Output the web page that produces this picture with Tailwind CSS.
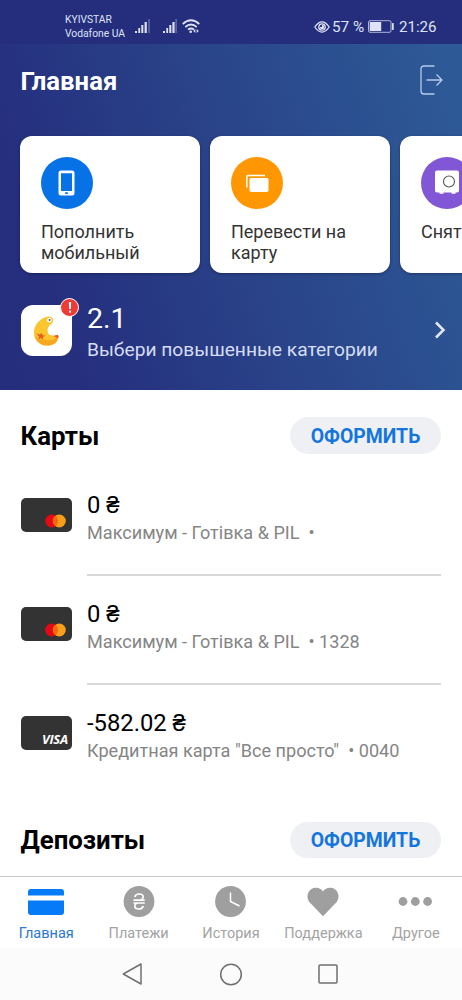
<!DOCTYPE html>
<html lang="ru">
<head>
<meta charset="utf-8">
<meta name="viewport" content="width=device-width, initial-scale=1">
<title>Главная</title>
<script src="https://cdn.jsdelivr.net/npm/@tailwindcss/browser@4"></script>
</head>
<body class="h-[1000px] w-[462px] overflow-hidden bg-white font-['Roboto',sans-serif] text-black">
<div class="flex h-[1000px] w-[462px] flex-col overflow-hidden">

  <!-- Status bar -->
  <div class="flex h-11 shrink-0 items-center bg-[#252e7c] pt-[9px] pr-[26px] pl-[65px] text-[#dfe3f8]">
    <div class="w-[62px] text-[10.3px] leading-[14px] whitespace-nowrap"><div>KYIVSTAR</div><div>Vodafone UA</div></div>
    <svg class="ml-[8px] h-[15px] w-[16px]" viewBox="0 0 16 15" fill="currentColor"><rect x="0" y="12" width="2" height="2"/><rect x="3.3" y="9" width="1.8" height="5"/><rect x="6.3" y="6" width="2" height="8"/><rect x="9.6" y="3" width="2.2" height="11"/><rect x="13.2" y="0" width="1.7" height="14" opacity=".3"/></svg>
    <svg class="ml-[11px] h-[15px] w-[16px]" viewBox="0 0 16 15" fill="currentColor"><rect x="1" y="12" width="2" height="2"/><rect x="4.3" y="9" width="1.8" height="5"/><rect x="7.3" y="6" width="2" height="8"/><rect x="10.400" y="3" width="2.2" height="11"/><rect x="13.3" y="0" width="1.7" height="14" opacity=".3"/></svg>
    <svg class="ml-[4px] h-[15px] w-[18px]" viewBox="0 0 18 15" fill="none" stroke="currentColor" stroke-width="1.7"><path d="M.7 5Q9-2.500 17.300 5M3.300 8Q9 3 14.700 8M6 10.700Q9 8.300 12 10.700"/><circle cx="8.700" cy="12.700" r="1.300" fill="currentColor" stroke="none"/><path d="M13.300 10 11.300 12l2 2zM14.700 10l2 2-2 2z" fill="currentColor" stroke="none"/></svg>
    <svg class="ml-auto h-[12px] w-[16px]" viewBox="0 0 16 12" fill="none" stroke="currentColor" stroke-width="1.300"><path d="M.8 6Q8-4.300 15.200 6 8 16.300.8 6z"/><circle cx="8" cy="6" r="3.200"/><path d="M8 3.800A2.200 2.200 0 1 1 5.800 6H8z" fill="currentColor" stroke="none"/></svg>
    <span class="ml-[2px] w-[32px] text-[15.300px] leading-5 whitespace-nowrap">57 %</span>
    <svg class="ml-[4px] h-[13px] w-[26px]" viewBox="0 0 26 13" fill="none"><rect x=".5" y=".7" width="22.500" height="11.600" rx="1.500" stroke="currentColor" opacity=".75"/><rect x="1.700" y="2" width="11.500" height="9" fill="currentColor"/><rect x="24" y="3" width="1.700" height="7" rx=".6" fill="currentColor"/></svg>
    <span class="ml-[5px] w-[37px] text-[15.100px] leading-5 whitespace-nowrap">21:26</span>
  </div>

  <!-- Header -->
  <header class="flex h-[346px] shrink-0 flex-col overflow-hidden bg-[linear-gradient(72deg,#252e7c_0%,#252f7e_15%,#2a458a_55%,#2d5a96_97%)]">
    <div class="flex h-[92px] items-start justify-between pt-[21px] pr-[19px] pl-[20.5px]">
      <h1 class="text-[25.700px] leading-[32px] font-bold text-white">Главная</h1>
      <svg class="h-[30px] w-[24px]" viewBox="0 0 24 30" fill="none" stroke="#b7c9ec" stroke-width="1.300"><path d="M15.500 1H5Q2 1 2 4v22q0 3 3 3h10.500M7.500 15H23M17.500 9.500 23 15l-5.500 5.500"/></svg>
    </div>
    <div class="flex gap-[10px] pl-[20.4px] text-[18px] leading-[21px] text-[#333]">
      <div class="h-[136.5px] w-[180px] shrink-0 rounded-[12px] bg-white px-[20.6px] pt-[20.5px] shadow-[0_1px_3px_#0005]">
        <div class="flex size-[52px] items-center justify-center rounded-full bg-[#0672e6]">
          <svg class="h-[26px] w-[17px]" viewBox="0 0 17 26"><path fill="#fff" fill-rule="evenodd" d="M3 .5h11a2.500 2.500 0 0 1 2.500 2.500v20a2.500 2.500 0 0 1-2.500 2.500H3A2.500 2.500 0 0 1 .5 23V3A2.500 2.500 0 0 1 3 .5zM3 3.200v17.800h11V3.200zM7.200 22.200v1.700h2.600v-1.700z"/></svg>
        </div>
        <div class="mt-[12.5px]">Пополнить<br>мобильный</div>
      </div>
      <div class="h-[136.5px] w-[180px] shrink-0 rounded-[12px] bg-white px-[20.6px] pt-[20.5px] shadow-[0_1px_3px_#0005]">
        <div class="flex size-[52px] items-center justify-center rounded-full bg-[#ff9702]">
          <svg class="h-[18px] w-[24px]" viewBox="0 0 24 18"><path fill="none" stroke="#fff" stroke-width="1.500" d="M1.800 13.500V3Q1.800 1.500 3.300 1.500H20"/><rect x="4.500" y="4" width="19" height="14" rx="1.800" fill="#fff"/></svg>
        </div>
        <div class="mt-[12.5px]">Перевести на<br>карту</div>
      </div>
      <div class="h-[136.5px] w-[180px] shrink-0 rounded-[12px] bg-white px-[20.6px] pt-[20.5px] shadow-[0_1px_3px_#0005]">
        <div class="flex size-[52px] items-center justify-center rounded-full bg-[#8157d6]">
          <svg class="h-[25px] w-[24px]" viewBox="0 0 24 25"><path fill="#fff" d="M2 .5h20q2 0 2 2v18q0 2-2 2h-1.500v1.300h-4v-1.300h-8v1.300h-4v-1.300H2q-2 0-2-2v-18q0-2 2-2z"/><circle cx="14" cy="11.500" r="5.500" fill="none" stroke="#555" stroke-width="1.100"/></svg>
        </div>
        <div class="mt-[12.5px] whitespace-nowrap">Снят</div>
      </div>
    </div>
    <div class="mt-[30.5px] flex h-[60px] pr-[16px] pl-[20.5px]">
      <div class="relative mt-[1.5px] size-[51.5px] rounded-[12px] bg-white">
        <svg class="absolute top-[10px] left-[12.5px] h-[32px] w-[27px]" viewBox="0 0 28 34"><path fill="#fbc52e" d="M20.500 3.500Q17.500 .3 12.500 2.500C5 5.500.5 12 .7 19 1 27 7 32.500 14.500 32.500 21 32.500 26 29 26.700 23.500Q26.800 21 24 21.500 18 23.500 15.500 19 13.500 13.500 19 9.500 22.500 6.500 20.500 3.500z"/><path fill="#f6a821" d="M1 20q3 7 11 6 8 3 14-4 1 10-11.500 10.500Q3 32 1 20z"/><path fill="#e45e20" d="M17 21.700q4.500 1.300 9-.7 1.500 1.800.3 4-2.800-2.800-9.300-3.300zM3.500 19.500l3.500 1.200 2-1.700.8 2.500 3.200.5-2.800 1.500.3 2.500-2.500-1.500-2.500 1.200.5-2.700z"/><circle cx="17" cy="5.500" r="2.500" fill="#fff"/><circle cx="17.300" cy="5.300" r="1" fill="#555"/></svg>
        <div class="absolute -top-[6.5px] left-[39.5px] flex size-[19px] items-center justify-center rounded-full border border-white bg-[#ee3b36]">
          <svg class="h-[11px] w-[4px]" viewBox="0 0 4 11" fill="#fff"><path d="M.9 0h2.200L2.900 7H1.100z"/><rect x=".9" y="8.500" width="2.200" height="2.200" rx="1"/></svg>
        </div>
      </div>
      <div class="ml-[15px] grow whitespace-nowrap">
        <div class="text-[28.500px] leading-[32px] text-white">2.1</div>
        <div class="mt-[4px] text-[19.200px] leading-[22px] text-[#d5ddf5]">Выбери повышенные категории</div>
      </div>
      <svg class="mt-[17px] h-[20px] w-[12px]" viewBox="0 0 12 20" fill="none" stroke="#e3e8f8" stroke-width="2.500"><path d="M2 2.500 9.500 10 2 17.500"/></svg>
    </div>
  </header>

  <!-- Accounts -->
  <main class="flex h-[486px] shrink-0 flex-col overflow-hidden pr-[21px] pl-[20.5px]">
    <div class="mt-[27px] flex h-[37px] items-center justify-between">
      <h2 class="text-[25.800px] leading-[32px] font-bold">Карты</h2>
      <div class="flex h-[37px] w-[151px] items-center justify-center rounded-full bg-[#eff0f4] pt-[3px] text-[19.400px] font-bold text-[#1475dc]">ОФОРМИТЬ</div>
    </div>
    <div class="mt-[12px] flex h-[109px]">
      <div class="mt-[32.4px] flex h-[34px] w-[51.5px] shrink-0 items-end justify-end rounded-[5px] bg-[#333]">
        <svg class="mr-[6px] mb-[4px] h-[14px] w-[21px]" viewBox="0 0 22 14"><circle cx="7" cy="7" r="6.800" fill="#e50914"/><circle cx="15" cy="7" r="6.800" fill="#f79e1b"/><path fill="#f26a10" d="M11 1.500a6.800 6.800 0 0 1 0 11 6.800 6.800 0 0 1 0-11z"/></svg>
      </div>
      <div class="ml-[15px] h-[110px] grow border-b-2 border-[#d8d8d8] pt-[25px] whitespace-nowrap">
        <div class="text-[23.800px] leading-[28px]">0 ₴</div>
        <div class="mt-[3px] text-[18.100px] leading-[22px] text-[#858585]">Максимум - Готівка &amp; PIL&nbsp; •</div>
      </div>
    </div>
    <div class="flex h-[109px]">
      <div class="mt-[32.4px] flex h-[34px] w-[51.5px] shrink-0 items-end justify-end rounded-[5px] bg-[#333]">
        <svg class="mr-[6px] mb-[4px] h-[14px] w-[21px]" viewBox="0 0 22 14"><circle cx="7" cy="7" r="6.800" fill="#e50914"/><circle cx="15" cy="7" r="6.800" fill="#f79e1b"/><path fill="#f26a10" d="M11 1.500a6.800 6.800 0 0 1 0 11 6.800 6.800 0 0 1 0-11z"/></svg>
      </div>
      <div class="ml-[15px] h-[110px] grow border-b-2 border-[#d8d8d8] pt-[25px] whitespace-nowrap">
        <div class="text-[23.800px] leading-[28px]">0 ₴</div>
        <div class="mt-[3px] text-[18.100px] leading-[22px] text-[#858585]">Максимум - Готівка &amp; PIL&nbsp; • 1328</div>
      </div>
    </div>
    <div class="flex h-[109px]">
      <div class="mt-[32.4px] flex h-[34px] w-[51.5px] shrink-0 items-end justify-end rounded-[5px] bg-[#333]">
        <span class="mr-[4px] mb-[4px] font-['Open_Sans',sans-serif] text-[13px] leading-[13px] font-bold tracking-[-0.2px] text-white italic">VISA</span>
      </div>
      <div class="ml-[15px] grow pt-[25px] whitespace-nowrap">
        <div class="text-[23.800px] leading-[28px]">-582.02 ₴</div>
        <div class="mt-[3px] text-[18.100px] leading-[22px] text-[#858585]">Кредитная карта "Все просто"&nbsp; • 0040</div>
      </div>
    </div>
    <div class="mt-[28px] flex h-[37px] items-center justify-between">
      <h2 class="text-[25.800px] leading-[32px] font-bold">Депозиты</h2>
      <div class="flex h-[36px] w-[151px] items-center justify-center rounded-full bg-[#eff0f4] pt-[3px] text-[19.400px] font-bold text-[#1475dc]">ОФОРМИТЬ</div>
    </div>
  </main>

  <!-- Tab bar -->
  <nav class="grid h-[72px] shrink-0 grid-cols-5 border-t border-[#c8c8c8] text-center text-[14.500px] leading-[18px] text-[#a3a3a3]">
    <div class="flex flex-col items-center text-[#2878cf]">
      <svg class="mt-[8px] h-[32px] w-[36px]" viewBox="0 0 36 32" fill="#067bf8"><path d="M3 4h30q3 0 3 3v3.500H0V7q0-3 3-3zM0 15.500h36V27q0 3-3 3H3q-3 0-3-3z"/></svg>
      <span class="mt-[8px]">Главная</span>
    </div>
    <div class="flex flex-col items-center">
      <svg class="mt-[8px] size-[32px]" viewBox="0 0 32 32"><circle cx="16" cy="16.500" r="15.400" fill="#9f9f9f"/><path fill="none" stroke="#fff" stroke-width="1.700" d="M11.800 12Q12.500 9 16 9 20.200 9 20.200 12 20.200 14 18 15M14 18Q11.800 19 11.800 21 11.800 24 15.800 24 19.500 24 20.200 21M10.500 15.200h11.200M10.500 18h11.200"/></svg>
      <span class="mt-[8px]">Платежи</span>
    </div>
    <div class="flex flex-col items-center">
      <svg class="mt-[8px] size-[32px]" viewBox="0 0 32 32"><circle cx="15.500" cy="16.500" r="15.400" fill="#9f9f9f"/><path fill="none" stroke="#fff" stroke-width="1.500" d="M15.500 7.500v9L24.500 21"/></svg>
      <span class="mt-[8px]">История</span>
    </div>
    <div class="flex flex-col items-center">
      <svg class="mt-[8px] size-[32px]" viewBox="0 0 32 32" fill="#9f9f9f"><path d="M16 31.300 2.800 17.500C-1 13 .2 7 4.200 4.300 8 1.800 13.500 2.500 16 6.500 18.500 2.500 24 1.800 27.800 4.300 31.800 7 33 13 29.200 17.500z"/></svg>
      <span class="mt-[8px]">Поддержка</span>
    </div>
    <div class="flex flex-col items-center">
      <svg class="mt-[8px] h-[32px] w-[36px]" viewBox="0 0 36 32" fill="#9f9f9f"><circle cx="5" cy="16.500" r="4.400"/><circle cx="17.300" cy="16.500" r="4.400"/><circle cx="29.600" cy="16.500" r="4.400"/></svg>
      <span class="mt-[8px]">Другое</span>
    </div>
  </nav>

  <!-- System navigation -->
  <div class="flex h-[52px] shrink-0 items-center bg-[#fbfbfb] pl-[122px] text-[#707070]">
    <svg class="size-[22px]" viewBox="0 0 22 22" fill="none" stroke="currentColor" stroke-width="1.500" stroke-linejoin="round"><path d="M19 1v20L1.300 11z"/></svg>
    <svg class="ml-[75px] size-[24px]" viewBox="0 0 24 24" fill="none" stroke="currentColor" stroke-width="1.500"><circle cx="12" cy="12.500" r="10.300"/></svg>
    <svg class="ml-[75.400px] size-[20px]" viewBox="0 0 20 20" fill="none" stroke="currentColor" stroke-width="1.500"><rect x="1" y="1" width="18" height="18" rx="1"/></svg>
  </div>
</div>
</body>
</html>
